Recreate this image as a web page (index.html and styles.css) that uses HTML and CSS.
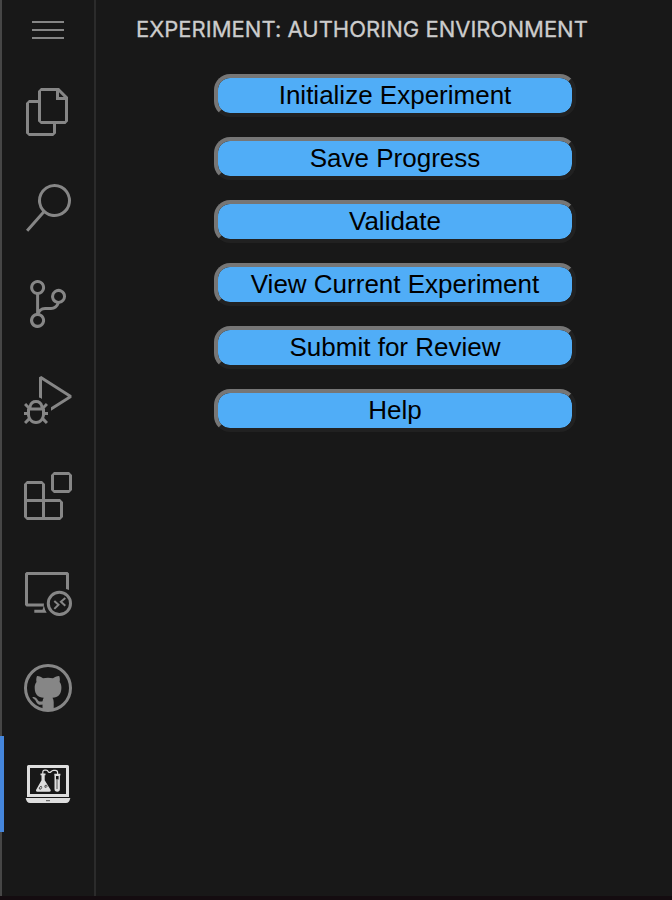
FILE: index.html
```html
<!DOCTYPE html>
<html lang="en">
<head>
<meta charset="utf-8">
<title>Experiment: Authoring Environment</title>
<link rel="stylesheet" href="styles.css">
</head>
<body>
<div class="workbench">
  <nav class="activity-bar">
    <div class="menu"><span></span><span></span><span></span></div>
    <div class="item"><svg viewBox="0 0 24 24"><path d="M17.5 0h-9L7 1.5V6H2.5L1 7.5v15.07L2.5 24h12.07L16 22.57V18h4.7l1.3-1.43V4.5L17.5 0zm0 2.12l2.38 2.38H17.5V2.12zm-3 20.38h-12v-15H7v9.07L8.5 18h6v4.5zm6-6h-12v-15H16V6h4.5v10.5z"/></svg></div>
    <div class="item"><svg viewBox="0 0 24 24"><path d="M15.25 0a8.25 8.25 0 0 0-6.18 13.72L1 22.88l1.12 1 8.05-9.12A8.251 8.251 0 1 0 15.25.01V0zm0 15a6.75 6.75 0 1 1 0-13.5 6.75 6.75 0 0 1 0 13.5z"/></svg></div>
    <div class="item"><svg viewBox="0 0 24 24"><path d="M21.007 8.222A3.738 3.738 0 0 0 15.045 5.2a3.737 3.737 0 0 0 1.156 6.583 2.988 2.988 0 0 1-2.668 1.67h-2.99a4.456 4.456 0 0 0-2.989 1.165V7.4a3.737 3.737 0 1 0-1.494 0v9.117a3.776 3.776 0 1 0 1.816.099 2.99 2.99 0 0 1 2.668-1.667h2.99a4.484 4.484 0 0 0 4.223-3.039 3.736 3.736 0 0 0 3.25-3.687zM4.565 3.738a2.242 2.242 0 1 1 4.484 0 2.242 2.242 0 0 1-4.484 0zm4.484 16.441a2.242 2.242 0 1 1-4.484 0 2.242 2.242 0 0 1 4.484 0zm8.221-9.715a2.242 2.242 0 1 1 0-4.485 2.242 2.242 0 0 1 0 4.485z"/></svg></div>
    <div class="item"><svg viewBox="0 0 24 24"><path d="M10.94 13.5l-1.32 1.32a3.73 3.73 0 0 0-7.24 0L1.06 13.5 0 14.56l1.72 1.72-.22.22V18H0v1.5h1.5v.08c.077.489.214.966.41 1.42L0 22.94 1.06 24l1.65-1.65A4.308 4.308 0 0 0 6 24a4.31 4.31 0 0 0 3.29-1.65L10.94 24 12 22.94 10.09 21c.198-.464.336-.951.41-1.45v-.1H12V18h-1.5v-1.5l-.22-.22L12 14.56l-1.06-1.06zM6 13.5a2.25 2.25 0 0 1 2.25 2.25h-4.5A2.25 2.25 0 0 1 6 13.5zm3 6a3.33 3.33 0 0 1-3 3 3.33 3.33 0 0 1-3-3v-2.25h6v2.25zm14.76-9.9v1.26L13.5 17.37V15.6l8.5-5.37L9 2v9.46a5.07 5.07 0 0 0-1.5-.72V.63L8.64 0l15.12 9.6z"/></svg></div>
    <div class="item"><svg viewBox="0 0 24 24"><path d="M13.5 1.5L15 0h7.5L24 1.5V9l-1.5 1.5H15L13.5 9V1.5zm1.5 0V9h7.5V1.5H15zM0 15V6l1.5-1.5H9L10.5 6v7.5H18l1.5 1.5v7.5L18 24H1.5L0 22.5V15zm9-1.5V6H1.5v7.5H9zM9 15H1.5v7.5H9V15zm1.5 7.5H18V15h-7.5v7.5z"/></svg></div>
    <div class="item"><svg viewBox="0 0 48 48">
      <path d="M2.500 4h41L45 5.500V22q-1.300-.8-3-1.100V7H4v28.500h16q-.3 1.500-.1 3H2.500L1 37V5.500zM10.300 41.700H18.500l1-3.200h.7q.6 3.500 2.500 6.300H10.300z"/>
      <path class="line" d="M46.500 35.400a11.100 11.100 0 1 1-22.200 0a11.100 11.100 0 0 1 22.200 0z"/>
      <path class="line thin" d="M30.300 32.900l4.200 3.900-4.200 4.100M41.300 29.900l-4.400 3.800 4.400 4"/>
    </svg></div>
    <div class="item"><svg viewBox="0 0 48 48">
      <circle class="line" cx="24" cy="24" r="22.500"/>
      <path d="M13 12.100C15.300 12 17.600 13.300 19 14.300Q24 13.400 29 14.300C30.500 13.300 33 12 35.200 12.100C36 14 36 16.200 35.600 18C37 19.500 37.500 21.500 37.400 24C37.200 30.500 34.200 33.300 28.500 33.700Q29.700 35.500 29.700 38V46.500H18.500V40.600C15.200 41.300 13.200 40.200 12.100 37.700C11.400 36 10.500 35.100 9 34.200C8.100 33.600 8.400 32.900 9.400 32.900C11.400 32.900 12.500 34.100 13.400 35.400C14.700 37.500 16.300 38.100 18.600 37.200Q18.700 35.200 19.700 33.700C14 33.300 10.800 30.500 10.700 24C10.600 21.500 11.200 19.500 12.500 18C12.100 16.200 12.200 14 13 12.100z"/>
    </svg></div>
    <div class="item active"><svg viewBox="0 0 48 48">
      <path fill-rule="evenodd" d="M4.500 5h39Q45 5 45 6.500V37H3V6.500Q3 5 4.500 5zM6 8v26h36V8z"/>
      <path d="M1.700 38h44.600Q45.500 43 42 43H6Q2.500 43 1.700 38z"/>
      <path d="M16.500 13.500h5v1.700h-.8v5.100l6 9.700q.5 1.800-1.300 1.800H13.300Q11.500 31.800 12 30l5.500-9.700v-5.100h-1z"/>
      <path class="pipe" d="M18.800 14v-1.800q0-2 2-2h1.200q1.600 0 2.400 1.800 1.300 1 2.600-.2 1-1.500 2.600-1.500h1.800q2.200 0 2.200 2.200v1.700"/>
      <path d="M30.300 13.700h6.100v1.800h-.5V29a2.700 2.700 0 0 1-5.400 0V15.500h-.2z"/>
      <path class="hole" d="M32 16h2.600v3.500H32z"/>
      <path class="detail" d="M33 20v9M16 26.800q1.800-1.300 1.700.7-.6 2.600-2.300 1.500-.5-1.200.6-2.200zM21 25.500q2-1 2.100.7-.6 1.700-2.200 1zM22 40.700h4"/>
    </svg></div>
  </nav>
  <main class="panel">
    <h1>EXPERIMENT: AUTHORING ENVIRONMENT</h1>
    <div class="actions">
      <button>Initialize Experiment</button>
      <button>Save Progress</button>
      <button>Validate</button>
      <button>View Current Experiment</button>
      <button>Submit for Review</button>
      <button>Help</button>
    </div>
  </main>
</div>
</body>
</html>
```
FILE: styles.css
```css
* { box-sizing: border-box; }
body { margin: 0; background: #181818; }
.workbench {
  display: flex;
  height: 900px;
  border-bottom: 4px solid #140c10;
}
.activity-bar {
  width: 96px;
  flex: none;
  border-left: 2px solid #464646;
  border-right: 2px solid #2b2b2b;
}
.menu {
  height: 64px;
  padding: 21px 0 0 30px;
  display: flex;
  flex-direction: column;
  gap: 6px;
}
.menu span { width: 32px; height: 2px; background: #868686; }
.item {
  height: 96px;
  padding: 24px 0 0 22px;
  color: #868686;
}
.item svg { display: block; width: 48px; height: 48px; fill: currentColor; }
.item .line { fill: none; stroke: currentColor; stroke-width: 3; }
.item .thin { stroke-width: 2; }
.item.active {
  color: #dedede;
  margin-left: -2px;
  padding-left: 20px;
  border-left: 4px solid #4586dc;
}
.pipe { fill: none; stroke: currentColor; stroke-width: 1.2; }
.hole { fill: #181818; }
.detail { fill: none; stroke: #303030; stroke-width: 0.8; }
.panel { flex: 1; }
h1 {
  margin: 0;
  height: 74px;
  padding: 15px 0 0 40px;
  font: 400 22px/28px Inter, sans-serif;
  letter-spacing: 0.02px;
  -webkit-text-stroke: 0.3px #cccccc;
  color: #cccccc;
  white-space: nowrap;
}
.actions {
  width: 362px;
  margin-left: 118px;
  display: flex;
  flex-direction: column;
  gap: 20px;
}
button {
  height: 43px;
  padding: 0;
  border: 4px solid;
  border-color: #767676 #212121 #212121 #767676;
  border-radius: 16px;
  background: #50adf7;
  background-clip: padding-box;
  color: #000;
  font: 26px/35px "Liberation Sans", Arial, sans-serif;
}
```
